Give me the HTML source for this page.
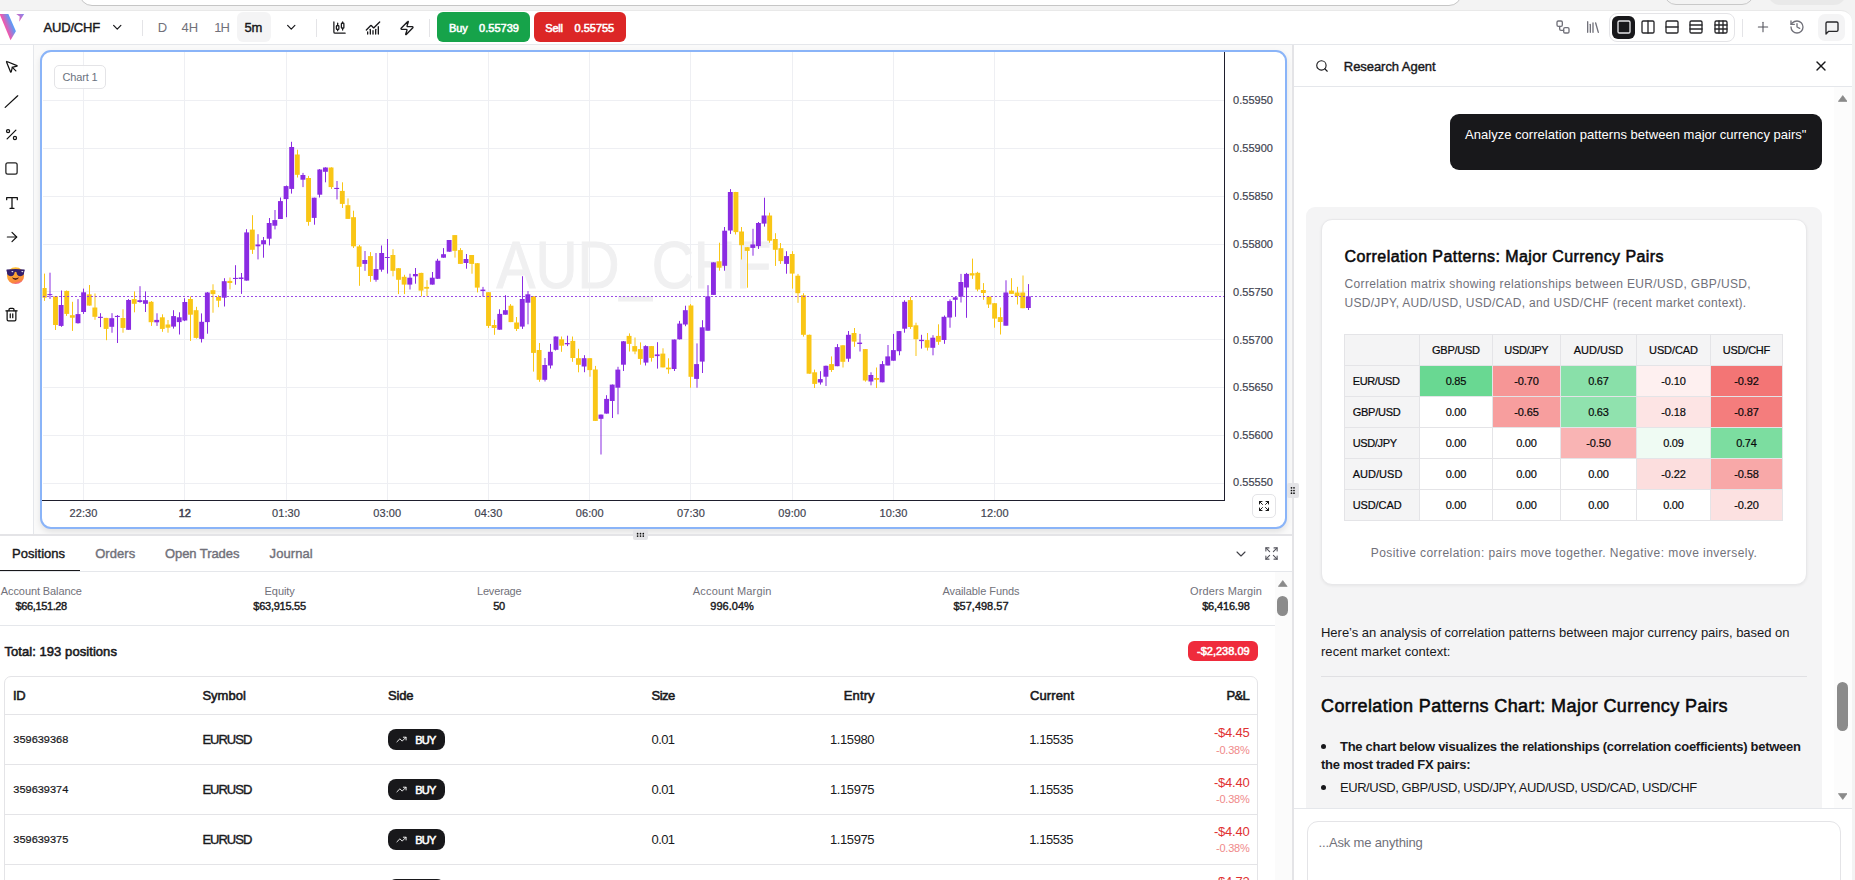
<!DOCTYPE html>
<html><head><meta charset="utf-8"><title>AUD/CHF</title><style>
*{box-sizing:border-box;margin:0;padding:0}
html,body{width:1855px;height:880px;overflow:hidden;background:#f3f3f3}
body{font-family:"Liberation Sans",sans-serif;position:relative}
.r{position:absolute;display:block}
.t{position:absolute;white-space:nowrap}
</style></head><body>
<div class="r" style="left:0.00px;top:0.00px;width:1855.00px;height:880.00px;background:#f3f3f3;"></div>
<div class="r" style="left:79.00px;top:-20.00px;width:1383.00px;height:25.50px;background:#ffffff;border:1px solid #c6c6c6;border-radius:13px;"></div>
<div class="r" style="left:1664.00px;top:-20.00px;width:90.00px;height:25.00px;background:#f3f3f3;border:1px solid #c9c9c9;border-radius:12px;"></div>
<div class="r" style="left:1768.00px;top:-20.00px;width:78.00px;height:25.00px;background:#e9e9e9;border-radius:12px;"></div>
<div class="r" style="left:0.00px;top:10.00px;width:1852.00px;height:870.00px;background:#ffffff;border-top-right-radius:11px;border-top:1px solid #e9e9e9;"></div>
<div class="r" style="left:0.00px;top:44.00px;width:1852.00px;height:1.00px;background:#e5e7eb;"></div>
<svg class="r" style="left:0;top:12px" width="28" height="30" viewBox="0 12 28 30"><defs><linearGradient id="lg" gradientUnits="userSpaceOnUse" x1="4.4" y1="25" x2="11.9" y2="22"><stop offset="0.05" stop-color="#ef58ad"/><stop offset="0.95" stop-color="#5b9bf8"/></linearGradient><linearGradient id="lg2" x1="0" y1="1" x2="1" y2="0"><stop offset="0.2" stop-color="#ee58b2"/><stop offset="1" stop-color="#7f8bf0"/></linearGradient></defs><polygon points="-0.4,14 8.4,14 15.9,31.2 10.5,40.2" fill="url(#lg)"/><polygon points="16.2,13.9 24.2,13.9 19.2,21.8 19.7,16.4" fill="url(#lg2)"/></svg>
<div class="t fit" id="t1" style="top:18.50px;font-size:13px;line-height:18px;color:#18181b;-webkit-text-stroke:0.4px #18181b;letter-spacing:-0.197px;left:43.60px;">AUD/CHF</div>
<svg class="r" style="left:110.00px;top:20.20px;" width="14.5" height="14.5" viewBox="0 0 24 24" fill="none" stroke="#18181b" stroke-width="2" stroke-linecap="round" stroke-linejoin="round"><path d="m6 9 6 6 6-6"/></svg>
<div class="r" style="left:142.00px;top:19.50px;width:1.00px;height:16.00px;background:#e4e4e7;"></div>
<div class="t fit" id="t2" style="top:18.50px;font-size:13px;line-height:18px;color:#71717a;letter-spacing:-0.191px;left:157.80px;">D</div>
<div class="t fit" id="t3" style="top:18.50px;font-size:13px;line-height:18px;color:#71717a;letter-spacing:-0.012px;left:181.60px;">4H</div>
<div class="t fit" id="t4" style="top:18.50px;font-size:13px;line-height:18px;color:#71717a;letter-spacing:-1.013px;left:214.20px;">1H</div>
<div class="r" style="left:237.00px;top:12.00px;width:34.00px;height:30.00px;background:#f4f4f5;border-radius:6px;"></div>
<div class="t fit" id="t5" style="top:18.50px;font-size:13px;line-height:18px;color:#18181b;-webkit-text-stroke:0.4px #18181b;letter-spacing:-0.131px;left:244.50px;">5m</div>
<svg class="r" style="left:284.00px;top:20.20px;" width="14.5" height="14.5" viewBox="0 0 24 24" fill="none" stroke="#18181b" stroke-width="2" stroke-linecap="round" stroke-linejoin="round"><path d="m6 9 6 6 6-6"/></svg>
<div class="r" style="left:316.00px;top:18.50px;width:1.00px;height:18.00px;background:#e4e4e7;"></div>
<svg class="r" style="left:331.60px;top:20.20px;" width="15" height="15" viewBox="0 0 24 24" fill="none" stroke="#18181b" stroke-width="2" stroke-linecap="round" stroke-linejoin="round"><path d="M9 5v4"/><rect width="4" height="6" x="7" y="9" rx="1"/><path d="M9 15v2"/><path d="M17 3v2"/><rect width="4" height="8" x="15" y="5" rx="1"/><path d="M17 13v3"/><path d="M3 3v16a2 2 0 0 0 2 2h16"/></svg>
<svg class="r" style="left:364.50px;top:19.50px;" width="16" height="16" viewBox="0 0 24 24" fill="none" stroke="#18181b" stroke-width="2" stroke-linecap="round" stroke-linejoin="round"><path d="M12 16v5"/><path d="M16 14v7"/><path d="M20 10v11"/><path d="m22 3-8.646 8.646a.5.5 0 0 1-.708 0L9.354 8.354a.5.5 0 0 0-.707 0L2 15"/><path d="M4 18v3"/><path d="M8 14v7"/></svg>
<svg class="r" style="left:398.50px;top:19.50px;" width="16" height="16" viewBox="0 0 24 24" fill="none" stroke="#18181b" stroke-width="2" stroke-linecap="round" stroke-linejoin="round"><path d="M4 14a1 1 0 0 1-.78-1.63l9.9-10.2a.5.5 0 0 1 .86.46l-1.92 6.02A1 1 0 0 0 13 10h7a1 1 0 0 1 .78 1.63l-9.9 10.2a.5.5 0 0 1-.86-.46l1.92-6.02A1 1 0 0 0 11 14z"/></svg>
<div class="r" style="left:429.00px;top:18.50px;width:1.00px;height:18.00px;background:#e4e4e7;"></div>
<div class="r" style="left:437.00px;top:12.00px;width:93.00px;height:30.00px;background:#16a34a;border-radius:6px;"></div>
<div class="t fit" id="t6" style="top:20.70px;font-size:11px;line-height:15px;color:#fff;-webkit-text-stroke:0.55px #fff;letter-spacing:-0.056px;left:449.00px;">Buy</div>
<div class="t fit" id="t7" style="top:20.70px;font-size:11px;line-height:15px;color:#fff;-webkit-text-stroke:0.55px #fff;letter-spacing:0.033px;left:479.00px;">0.55739</div>
<div class="r" style="left:534.00px;top:12.00px;width:92.00px;height:30.00px;background:#dc2626;border-radius:6px;"></div>
<div class="t fit" id="t8" style="top:20.70px;font-size:11px;line-height:15px;color:#fff;-webkit-text-stroke:0.55px #fff;letter-spacing:-0.211px;left:545.30px;">Sell</div>
<div class="t fit" id="t9" style="top:20.70px;font-size:11px;line-height:15px;color:#fff;-webkit-text-stroke:0.55px #fff;letter-spacing:-0.024px;left:574.60px;">0.55755</div>
<svg class="r" style="left:1554.50px;top:18.90px;" width="16" height="16" viewBox="0 0 24 24" fill="none" stroke="#71717a" stroke-width="2" stroke-linecap="round" stroke-linejoin="round"><rect width="8" height="8" x="3" y="3" rx="2"/><path d="M7 11v4a2 2 0 0 0 2 2h4"/><rect width="8" height="8" x="13" y="13" rx="2"/></svg>
<svg class="r" style="left:1584.50px;top:18.90px;" width="16" height="16" viewBox="0 0 24 24" fill="none" stroke="#71717a" stroke-width="2" stroke-linecap="round" stroke-linejoin="round"><path d="m16 6 4 14"/><path d="M12 6v14"/><path d="M8 8v12"/><path d="M4 4v16"/></svg>
<div class="r" style="left:1609.00px;top:13.00px;width:126.00px;height:29.00px;background:#fff;border:1px solid #e4e4e7;border-radius:8px;"></div>
<div class="r" style="left:1612.00px;top:16.00px;width:23.00px;height:23.00px;background:#18181b;border-radius:6px;"></div>
<svg class="r" style="left:1615.50px;top:18.90px;" width="16" height="16" viewBox="0 0 24 24" fill="none" stroke="#e4e4e7" stroke-width="2" stroke-linecap="round" stroke-linejoin="round"><rect width="18" height="18" x="3" y="3" rx="2"/></svg>
<svg class="r" style="left:1639.50px;top:18.90px;" width="16" height="16" viewBox="0 0 24 24" fill="none" stroke="#27272a" stroke-width="2" stroke-linecap="round" stroke-linejoin="round"><rect width="18" height="18" x="3" y="3" rx="2"/><path d="M12 3v18"/></svg>
<svg class="r" style="left:1663.50px;top:18.90px;" width="16" height="16" viewBox="0 0 24 24" fill="none" stroke="#27272a" stroke-width="2" stroke-linecap="round" stroke-linejoin="round"><rect width="18" height="18" x="3" y="3" rx="2"/><path d="M3 12h18"/></svg>
<svg class="r" style="left:1688.20px;top:18.90px;" width="16" height="16" viewBox="0 0 24 24" fill="none" stroke="#27272a" stroke-width="2" stroke-linecap="round" stroke-linejoin="round"><rect width="18" height="18" x="3" y="3" rx="2"/><path d="M21 9H3"/><path d="M21 15H3"/></svg>
<svg class="r" style="left:1712.50px;top:18.90px;" width="16" height="16" viewBox="0 0 24 24" fill="none" stroke="#27272a" stroke-width="2" stroke-linecap="round" stroke-linejoin="round"><rect width="18" height="18" x="3" y="3" rx="2"/><path d="M3 9h18"/><path d="M3 15h18"/><path d="M9 3v18"/><path d="M15 3v18"/></svg>
<div class="r" style="left:1742.00px;top:18.50px;width:1.00px;height:18.00px;background:#e4e4e7;"></div>
<svg class="r" style="left:1755.30px;top:18.90px;" width="16" height="16" viewBox="0 0 24 24" fill="none" stroke="#52525b" stroke-width="1.6" stroke-linecap="round" stroke-linejoin="round"><path d="M5 12h14"/><path d="M12 5v14"/></svg>
<svg class="r" style="left:1789.30px;top:19.30px;" width="16" height="16" viewBox="0 0 24 24" fill="none" stroke="#71717a" stroke-width="2" stroke-linecap="round" stroke-linejoin="round"><path d="M3 12a9 9 0 1 0 9-9 9.75 9.75 0 0 0-6.74 2.74L3 8"/><path d="M3 3v5h5"/><path d="M12 7v5l4 2"/></svg>
<div class="r" style="left:1818.00px;top:14.00px;width:27.00px;height:27.00px;background:#f4f4f5;border-radius:7px;"></div>
<svg class="r" style="left:1823.60px;top:19.60px;" width="16" height="16" viewBox="0 0 24 24" fill="none" stroke="#27272a" stroke-width="2" stroke-linecap="round" stroke-linejoin="round"><path d="M21 15a2 2 0 0 1-2 2H7l-4 4V5a2 2 0 0 1 2-2h14a2 2 0 0 1 2 2z"/></svg>
<div class="r" style="left:33.00px;top:45.00px;width:1.00px;height:490.00px;background:#e5e7eb;"></div>
<svg class="r" style="left:3.50px;top:58.90px;" width="15" height="15" viewBox="0 0 24 24" fill="none" stroke="#111" stroke-width="2" stroke-linecap="round" stroke-linejoin="round"><path d="M4.037 4.688a.495.495 0 0 1 .651-.651l16 6.5a.5.5 0 0 1-.063.947l-6.124 1.58a2 2 0 0 0-1.438 1.435l-1.579 6.126a.5.5 0 0 1-.947.063z"/><path d="m13 13 6 6"/></svg>
<svg class="r" style="left:0;top:90px" width="24" height="24" viewBox="0 90 24 24"><path d="M5.2 107.4 L17.7 95.8" stroke="#111" stroke-width="1.25" stroke-linecap="round"/></svg>
<svg class="r" style="left:4.00px;top:127.00px;" width="15" height="15" viewBox="0 0 24 24" fill="none" stroke="#111" stroke-width="2" stroke-linecap="round" stroke-linejoin="round"><line x1="19" x2="5" y1="5" y2="19"/><circle cx="6.5" cy="6.5" r="2.5"/><circle cx="17.5" cy="17.5" r="2.5"/></svg>
<svg class="r" style="left:3.90px;top:161.20px;" width="15" height="15" viewBox="0 0 24 24" fill="none" stroke="#222" stroke-width="2" stroke-linecap="round" stroke-linejoin="round"><rect width="18" height="18" x="3" y="3" rx="3"/></svg>
<svg class="r" style="left:3.70px;top:194.70px;" width="16" height="16" viewBox="0 0 24 24" fill="none" stroke="#111" stroke-width="1.9" stroke-linecap="round" stroke-linejoin="round"><polyline points="4 7 4 4 20 4 20 7"/><line x1="9" x2="15" y1="20" y2="20"/><line x1="12" x2="12" y1="4" y2="20"/></svg>
<svg class="r" style="left:3.60px;top:228.50px;" width="16" height="16" viewBox="0 0 24 24" fill="none" stroke="#111" stroke-width="1.8" stroke-linecap="round" stroke-linejoin="round"><path d="M5 12h14"/><path d="m12 5 7 7-7 7"/></svg>
<svg class="r" style="left:4px;top:264px" width="24" height="24" viewBox="4 264 24 24"><defs><linearGradient id="em" x1="0.3" y1="0" x2="0.6" y2="1"><stop offset="0" stop-color="#ffc234"/><stop offset="0.55" stop-color="#fda033"/><stop offset="0.85" stop-color="#f9843f"/><stop offset="1" stop-color="#f0609a"/></linearGradient></defs><ellipse cx="15.55" cy="275.7" rx="8.6" ry="8.4" fill="url(#em)"/><path d="M6.6 269.6 Q15.5 268.6 24.6 269.6 L24.7 271.3 L24.2 271.6 Q24.3 276.2 20.3 276.2 Q16.9 276.2 16.5 272.2 Q15.55 271.3 14.6 272.2 Q14.2 276.2 10.8 276.2 Q6.8 276.2 6.9 271.6 L6.4 271.3 Z" fill="#35206c"/><ellipse cx="12.4" cy="271.6" rx="1" ry="0.6" fill="#fff" opacity="0.9"/><ellipse cx="22.3" cy="271.6" rx="1" ry="0.6" fill="#fff" opacity="0.9"/><path d="M12 277.3 Q15.5 279.2 19 277.3 Q18.2 280 15.5 280 Q12.8 280 12 277.3 Z" fill="#4d2218"/></svg>
<svg class="r" style="left:4.20px;top:307.30px;" width="15" height="15" viewBox="0 0 24 24" fill="none" stroke="#111" stroke-width="2" stroke-linecap="round" stroke-linejoin="round"><path d="M3 6h18"/><path d="M19 6v14c0 1-1 2-2 2H7c-1 0-2-1-2-2V6"/><path d="M8 6V4c0-1 1-2 2-2h4c1 0 2 1 2 2v2"/><line x1="10" x2="10" y1="11" y2="17"/><line x1="14" x2="14" y1="11" y2="17"/></svg>
<div class="r" style="left:34.00px;top:45.00px;width:1258.30px;height:489.00px;background:#fafafa;"></div>
<div class="r" style="left:40.00px;top:50.00px;width:1247.00px;height:478.80px;background:#fff;border:2px solid #8ab4f8;border-radius:11px;box-shadow:0 3px 6px rgba(0,0,0,0.10);"></div>
<svg class="r" style="left:0;top:0" width="1300" height="540" viewBox="0 0 1300 540" shape-rendering="crispEdges"><defs><clipPath id="plot"><rect x="42.5" y="52" width="1181.5" height="448"/></clipPath></defs><rect x="83" y="52" width="1" height="448" fill="#eeeff3"/><rect x="184" y="52" width="1" height="448" fill="#eeeff3"/><rect x="286" y="52" width="1" height="448" fill="#eeeff3"/><rect x="387" y="52" width="1" height="448" fill="#eeeff3"/><rect x="488" y="52" width="1" height="448" fill="#eeeff3"/><rect x="589" y="52" width="1" height="448" fill="#eeeff3"/><rect x="690" y="52" width="1" height="448" fill="#eeeff3"/><rect x="792" y="52" width="1" height="448" fill="#eeeff3"/><rect x="893" y="52" width="1" height="448" fill="#eeeff3"/><rect x="994" y="52" width="1" height="448" fill="#eeeff3"/><rect x="42.5" y="100" width="1181.5" height="1" fill="#eeeff3"/><rect x="42.5" y="148" width="1181.5" height="1" fill="#eeeff3"/><rect x="42.5" y="196" width="1181.5" height="1" fill="#eeeff3"/><rect x="42.5" y="244" width="1181.5" height="1" fill="#eeeff3"/><rect x="42.5" y="291" width="1181.5" height="1" fill="#eeeff3"/><rect x="42.5" y="339" width="1181.5" height="1" fill="#eeeff3"/><rect x="42.5" y="387" width="1181.5" height="1" fill="#eeeff3"/><rect x="42.5" y="435" width="1181.5" height="1" fill="#eeeff3"/><rect x="42.5" y="483" width="1181.5" height="1" fill="#eeeff3"/></svg>
<div class="t" style="left:334px;top:224.5px;width:600px;text-align:center;font-size:67.5px;line-height:80px;color:#f0f0f1;-webkit-text-stroke:1.1px #f0f0f1;transform:scaleX(0.862);transform-origin:50% 50%">AUD_CHF</div>
<svg class="r" style="left:0;top:0" width="1300" height="540" viewBox="0 0 1300 540"><g clip-path="url(#plot)"><rect x="44" y="273.6" width="1" height="27.3" fill="#f9c616"/><rect x="41.79" y="288.0" width="4.9" height="9.7" fill="#f9c616"/><rect x="49" y="272.7" width="2" height="26.2" fill="#8a2be2" opacity="0.5"/><rect x="47.41" y="294.1" width="4.9" height="1.0" fill="#8a2be2"/><rect x="55" y="296.4" width="1" height="33.6" fill="#f9c616"/><rect x="53.04" y="296.4" width="4.9" height="28.6" fill="#f9c616"/><rect x="61" y="290.5" width="1" height="36.3" fill="#8a2be2"/><rect x="58.66" y="305.0" width="4.9" height="20.9" fill="#8a2be2"/><rect x="66" y="290.5" width="1" height="25.4" fill="#f9c616"/><rect x="64.28" y="290.9" width="4.9" height="23.0" fill="#f9c616"/><rect x="72" y="301.8" width="1" height="29.1" fill="#f9c616"/><rect x="69.91" y="315.2" width="4.9" height="2.5" fill="#f9c616"/><rect x="77" y="299.1" width="2" height="24.5" fill="#8a2be2" opacity="0.5"/><rect x="75.53" y="314.1" width="4.9" height="9.1" fill="#8a2be2"/><rect x="83" y="288.6" width="1" height="25.3" fill="#8a2be2"/><rect x="81.15" y="292.3" width="4.9" height="19.7" fill="#8a2be2"/><rect x="89" y="285.0" width="1" height="20.6" fill="#f9c616"/><rect x="86.78" y="294.4" width="4.9" height="11.2" fill="#f9c616"/><rect x="94" y="293.5" width="2" height="26.3" fill="#f9c616" opacity="0.5"/><rect x="92.40" y="307.5" width="4.9" height="9.3" fill="#f9c616"/><rect x="100" y="313.2" width="1" height="13.9" fill="#8a2be2"/><rect x="98.02" y="316.8" width="4.9" height="1.1" fill="#8a2be2"/><rect x="106" y="317.9" width="1" height="22.3" fill="#f9c616"/><rect x="103.65" y="317.9" width="4.9" height="11.0" fill="#f9c616"/><rect x="111" y="313.2" width="2" height="19.5" fill="#8a2be2" opacity="0.5"/><rect x="109.27" y="318.2" width="4.9" height="8.6" fill="#8a2be2"/><rect x="117" y="315.0" width="1" height="28.0" fill="#8a2be2"/><rect x="114.90" y="315.9" width="4.9" height="1.1" fill="#8a2be2"/><rect x="122" y="309.3" width="2" height="23.4" fill="#f9c616" opacity="0.5"/><rect x="120.52" y="318.0" width="4.9" height="9.9" fill="#f9c616"/><rect x="128" y="299.1" width="1" height="30.7" fill="#8a2be2"/><rect x="126.14" y="300.0" width="4.9" height="29.8" fill="#8a2be2"/><rect x="134" y="291.4" width="1" height="20.9" fill="#f9c616"/><rect x="131.77" y="299.1" width="4.9" height="4.7" fill="#f9c616"/><rect x="139" y="286.2" width="2" height="16.5" fill="#8a2be2" opacity="0.5"/><rect x="137.39" y="300.2" width="4.9" height="1.8" fill="#8a2be2"/><rect x="145" y="291.4" width="1" height="20.6" fill="#8a2be2"/><rect x="143.01" y="300.2" width="4.9" height="3.6" fill="#8a2be2"/><rect x="151" y="301.1" width="1" height="24.8" fill="#f9c616"/><rect x="148.64" y="301.8" width="4.9" height="20.4" fill="#f9c616"/><rect x="156" y="313.3" width="2" height="12.6" fill="#8a2be2" opacity="0.5"/><rect x="154.26" y="319.9" width="4.9" height="2.4" fill="#8a2be2"/><rect x="162" y="314.3" width="1" height="17.5" fill="#f9c616"/><rect x="159.88" y="317.3" width="4.9" height="11.6" fill="#f9c616"/><rect x="167" y="320.0" width="2" height="12.7" fill="#f9c616" opacity="0.5"/><rect x="165.51" y="324.5" width="4.9" height="3.2" fill="#f9c616"/><rect x="173" y="310.2" width="1" height="18.4" fill="#8a2be2"/><rect x="171.13" y="316.1" width="4.9" height="10.5" fill="#8a2be2"/><rect x="179" y="312.3" width="1" height="22.2" fill="#8a2be2"/><rect x="176.75" y="317.3" width="4.9" height="4.8" fill="#8a2be2"/><rect x="184" y="298.2" width="1" height="22.9" fill="#8a2be2"/><rect x="182.38" y="302.0" width="4.9" height="18.5" fill="#8a2be2"/><rect x="190" y="296.6" width="1" height="44.3" fill="#f9c616"/><rect x="188.00" y="299.0" width="4.9" height="15.7" fill="#f9c616"/><rect x="196" y="306.8" width="1" height="31.8" fill="#f9c616"/><rect x="193.62" y="310.2" width="4.9" height="27.7" fill="#f9c616"/><rect x="201" y="313.4" width="1" height="29.1" fill="#8a2be2"/><rect x="199.25" y="321.8" width="4.9" height="17.1" fill="#8a2be2"/><rect x="207" y="292.1" width="1" height="41.6" fill="#8a2be2"/><rect x="204.87" y="292.5" width="4.9" height="29.6" fill="#8a2be2"/><rect x="212" y="284.3" width="2" height="28.4" fill="#f9c616" opacity="0.5"/><rect x="210.50" y="290.2" width="4.9" height="3.9" fill="#f9c616"/><rect x="218" y="295.2" width="1" height="12.0" fill="#f9c616"/><rect x="216.12" y="297.0" width="4.9" height="3.7" fill="#f9c616"/><rect x="224" y="278.2" width="1" height="28.3" fill="#8a2be2"/><rect x="221.74" y="281.2" width="4.9" height="16.5" fill="#8a2be2"/><rect x="229" y="277.5" width="2" height="11.9" fill="#f9c616" opacity="0.5"/><rect x="227.37" y="280.9" width="4.9" height="2.1" fill="#f9c616"/><rect x="235" y="265.2" width="1" height="19.5" fill="#8a2be2"/><rect x="232.99" y="277.9" width="4.9" height="1.1" fill="#8a2be2"/><rect x="241" y="273.0" width="1" height="20.9" fill="#8a2be2"/><rect x="238.61" y="277.5" width="4.9" height="1.5" fill="#8a2be2"/><rect x="246" y="229.2" width="1" height="51.4" fill="#8a2be2"/><rect x="244.24" y="232.4" width="4.9" height="48.2" fill="#8a2be2"/><rect x="252" y="215.2" width="1" height="38.7" fill="#f9c616"/><rect x="249.86" y="229.6" width="4.9" height="20.2" fill="#f9c616"/><rect x="257" y="234.2" width="2" height="25.2" fill="#8a2be2" opacity="0.5"/><rect x="255.48" y="244.5" width="4.9" height="1.8" fill="#8a2be2"/><rect x="263" y="237.0" width="1" height="20.7" fill="#8a2be2"/><rect x="261.11" y="240.2" width="4.9" height="4.1" fill="#8a2be2"/><rect x="269" y="218.0" width="1" height="27.4" fill="#8a2be2"/><rect x="266.73" y="223.0" width="4.9" height="15.7" fill="#8a2be2"/><rect x="274" y="210.0" width="2" height="19.4" fill="#8a2be2" opacity="0.5"/><rect x="272.35" y="220.1" width="4.9" height="5.6" fill="#8a2be2"/><rect x="280" y="197.5" width="1" height="21.5" fill="#8a2be2"/><rect x="277.98" y="201.1" width="4.9" height="17.9" fill="#8a2be2"/><rect x="286" y="185.5" width="1" height="31.7" fill="#8a2be2"/><rect x="283.60" y="186.1" width="4.9" height="13.0" fill="#8a2be2"/><rect x="291" y="141.8" width="1" height="51.8" fill="#8a2be2"/><rect x="289.22" y="147.0" width="4.9" height="41.9" fill="#8a2be2"/><rect x="297" y="149.7" width="1" height="27.8" fill="#f9c616"/><rect x="294.85" y="154.5" width="4.9" height="20.3" fill="#f9c616"/><rect x="302" y="172.9" width="2" height="14.2" fill="#8a2be2" opacity="0.5"/><rect x="300.47" y="175.0" width="4.9" height="4.7" fill="#8a2be2"/><rect x="308" y="175.9" width="1" height="49.8" fill="#f9c616"/><rect x="306.09" y="178.0" width="4.9" height="43.9" fill="#f9c616"/><rect x="314" y="197.7" width="1" height="27.0" fill="#8a2be2"/><rect x="311.72" y="197.7" width="4.9" height="20.2" fill="#8a2be2"/><rect x="319" y="169.1" width="1" height="28.4" fill="#8a2be2"/><rect x="317.34" y="169.5" width="4.9" height="25.2" fill="#8a2be2"/><rect x="325" y="167.3" width="1" height="15.0" fill="#8a2be2"/><rect x="322.97" y="167.5" width="4.9" height="4.3" fill="#8a2be2"/><rect x="331" y="167.3" width="1" height="21.6" fill="#f9c616"/><rect x="328.59" y="167.5" width="4.9" height="19.6" fill="#f9c616"/><rect x="336" y="181.0" width="2" height="18.4" fill="#8a2be2" opacity="0.5"/><rect x="334.21" y="187.9" width="4.9" height="1.1" fill="#8a2be2"/><rect x="342" y="182.3" width="1" height="25.7" fill="#f9c616"/><rect x="339.84" y="190.9" width="4.9" height="13.0" fill="#f9c616"/><rect x="347" y="198.4" width="2" height="20.5" fill="#f9c616" opacity="0.5"/><rect x="345.46" y="205.2" width="4.9" height="13.7" fill="#f9c616"/><rect x="353" y="210.7" width="1" height="37.3" fill="#f9c616"/><rect x="351.08" y="217.2" width="4.9" height="29.1" fill="#f9c616"/><rect x="359" y="245.0" width="1" height="40.8" fill="#f9c616"/><rect x="356.71" y="246.4" width="4.9" height="20.4" fill="#f9c616"/><rect x="364" y="251.0" width="2" height="19.8" fill="#8a2be2" opacity="0.5"/><rect x="362.33" y="260.0" width="4.9" height="3.9" fill="#8a2be2"/><rect x="370" y="252.1" width="1" height="29.7" fill="#f9c616"/><rect x="367.95" y="256.1" width="4.9" height="19.9" fill="#f9c616"/><rect x="375" y="253.0" width="2" height="28.7" fill="#8a2be2" opacity="0.5"/><rect x="373.58" y="269.1" width="4.9" height="10.7" fill="#8a2be2"/><rect x="381" y="245.5" width="1" height="26.2" fill="#8a2be2"/><rect x="379.20" y="253.0" width="4.9" height="16.7" fill="#8a2be2"/><rect x="387" y="239.0" width="1" height="34.6" fill="#8a2be2"/><rect x="384.82" y="257.0" width="4.9" height="1.0" fill="#8a2be2"/><rect x="392" y="249.2" width="2" height="27.1" fill="#f9c616" opacity="0.5"/><rect x="390.45" y="255.0" width="4.9" height="15.8" fill="#f9c616"/><rect x="398" y="268.0" width="1" height="26.1" fill="#f9c616"/><rect x="396.07" y="268.2" width="4.9" height="11.6" fill="#f9c616"/><rect x="404" y="274.8" width="1" height="19.3" fill="#f9c616"/><rect x="401.69" y="276.8" width="4.9" height="7.8" fill="#f9c616"/><rect x="409" y="273.7" width="2" height="15.8" fill="#8a2be2" opacity="0.5"/><rect x="407.32" y="277.7" width="4.9" height="6.9" fill="#8a2be2"/><rect x="415" y="268.0" width="1" height="15.7" fill="#8a2be2"/><rect x="412.94" y="274.0" width="4.9" height="2.3" fill="#8a2be2"/><rect x="421" y="272.8" width="1" height="23.5" fill="#f9c616"/><rect x="418.56" y="272.9" width="4.9" height="17.7" fill="#f9c616"/><rect x="426" y="280.2" width="2" height="16.1" fill="#f9c616" opacity="0.5"/><rect x="424.19" y="286.9" width="4.9" height="1.8" fill="#f9c616"/><rect x="432" y="272.0" width="1" height="12.6" fill="#8a2be2"/><rect x="429.81" y="277.7" width="4.9" height="6.9" fill="#8a2be2"/><rect x="437" y="258.8" width="1" height="20.0" fill="#8a2be2"/><rect x="435.44" y="260.7" width="4.9" height="18.1" fill="#8a2be2"/><rect x="443" y="248.1" width="1" height="9.6" fill="#8a2be2"/><rect x="441.06" y="254.2" width="4.9" height="3.5" fill="#8a2be2"/><rect x="449" y="240.0" width="1" height="11.7" fill="#8a2be2"/><rect x="446.68" y="240.0" width="4.9" height="11.7" fill="#8a2be2"/><rect x="454" y="235.1" width="2" height="22.5" fill="#f9c616" opacity="0.5"/><rect x="452.31" y="235.1" width="4.9" height="15.7" fill="#f9c616"/><rect x="460" y="248.1" width="1" height="15.8" fill="#f9c616"/><rect x="457.93" y="250.1" width="4.9" height="13.8" fill="#f9c616"/><rect x="466" y="254.0" width="1" height="14.7" fill="#8a2be2"/><rect x="463.55" y="259.0" width="4.9" height="4.0" fill="#8a2be2"/><rect x="471" y="255.0" width="2" height="18.7" fill="#f9c616" opacity="0.5"/><rect x="469.18" y="255.0" width="4.9" height="8.9" fill="#f9c616"/><rect x="477" y="263.1" width="1" height="29.3" fill="#f9c616"/><rect x="474.80" y="263.2" width="4.9" height="24.4" fill="#f9c616"/><rect x="482" y="286.9" width="2" height="9.7" fill="#8a2be2" opacity="0.5"/><rect x="480.42" y="289.6" width="4.9" height="1.4" fill="#8a2be2"/><rect x="488" y="292.1" width="1" height="35.9" fill="#f9c616"/><rect x="486.05" y="292.2" width="4.9" height="33.7" fill="#f9c616"/><rect x="494" y="319.8" width="1" height="15.0" fill="#f9c616"/><rect x="491.67" y="325.0" width="4.9" height="3.0" fill="#f9c616"/><rect x="499" y="309.3" width="1" height="20.4" fill="#8a2be2"/><rect x="497.29" y="313.9" width="4.9" height="15.8" fill="#8a2be2"/><rect x="505" y="295.2" width="1" height="19.5" fill="#8a2be2"/><rect x="502.92" y="310.2" width="4.9" height="4.5" fill="#8a2be2"/><rect x="510" y="304.1" width="1" height="18.0" fill="#f9c616"/><rect x="508.54" y="305.7" width="4.9" height="16.4" fill="#f9c616"/><rect x="516" y="317.0" width="1" height="14.0" fill="#f9c616"/><rect x="514.16" y="322.5" width="4.9" height="6.4" fill="#f9c616"/><rect x="522" y="276.2" width="1" height="52.7" fill="#8a2be2"/><rect x="519.79" y="299.0" width="4.9" height="27.6" fill="#8a2be2"/><rect x="527" y="291.1" width="2" height="33.2" fill="#8a2be2" opacity="0.5"/><rect x="525.41" y="294.3" width="4.9" height="8.4" fill="#8a2be2"/><rect x="533" y="296.3" width="1" height="75.3" fill="#f9c616"/><rect x="531.03" y="296.3" width="4.9" height="56.6" fill="#f9c616"/><rect x="539" y="343.0" width="1" height="38.8" fill="#f9c616"/><rect x="536.66" y="350.0" width="4.9" height="29.8" fill="#f9c616"/><rect x="544" y="358.0" width="2" height="23.5" fill="#8a2be2" opacity="0.5"/><rect x="542.28" y="365.0" width="4.9" height="14.8" fill="#8a2be2"/><rect x="550" y="343.9" width="1" height="24.6" fill="#8a2be2"/><rect x="547.90" y="351.8" width="4.9" height="13.7" fill="#8a2be2"/><rect x="555" y="336.5" width="1" height="14.0" fill="#8a2be2"/><rect x="553.53" y="336.5" width="4.9" height="13.3" fill="#8a2be2"/><rect x="561" y="336.5" width="1" height="15.3" fill="#f9c616"/><rect x="559.15" y="339.3" width="4.9" height="6.4" fill="#f9c616"/><rect x="567" y="335.7" width="1" height="10.4" fill="#8a2be2"/><rect x="564.78" y="343.0" width="4.9" height="1.3" fill="#8a2be2"/><rect x="572" y="336.5" width="1" height="25.3" fill="#f9c616"/><rect x="570.40" y="340.9" width="4.9" height="17.1" fill="#f9c616"/><rect x="578" y="348.8" width="1" height="23.5" fill="#f9c616"/><rect x="576.02" y="358.2" width="4.9" height="6.6" fill="#f9c616"/><rect x="584" y="355.2" width="1" height="17.0" fill="#8a2be2"/><rect x="581.65" y="358.2" width="4.9" height="8.3" fill="#8a2be2"/><rect x="589" y="358.0" width="2" height="18.7" fill="#f9c616" opacity="0.5"/><rect x="587.27" y="358.2" width="4.9" height="11.9" fill="#f9c616"/><rect x="595" y="365.9" width="1" height="55.0" fill="#f9c616"/><rect x="592.89" y="369.5" width="4.9" height="51.4" fill="#f9c616"/><rect x="600" y="414.5" width="2" height="40.0" fill="#8a2be2" opacity="0.5"/><rect x="598.52" y="414.6" width="4.9" height="4.2" fill="#8a2be2"/><rect x="606" y="395.2" width="1" height="18.4" fill="#8a2be2"/><rect x="604.14" y="398.9" width="4.9" height="14.7" fill="#8a2be2"/><rect x="612" y="384.5" width="1" height="33.5" fill="#8a2be2"/><rect x="609.76" y="384.6" width="4.9" height="16.4" fill="#8a2be2"/><rect x="617" y="366.8" width="2" height="47.5" fill="#8a2be2" opacity="0.5"/><rect x="615.39" y="369.6" width="4.9" height="18.1" fill="#8a2be2"/><rect x="623" y="341.0" width="1" height="30.0" fill="#8a2be2"/><rect x="621.01" y="341.3" width="4.9" height="23.4" fill="#8a2be2"/><rect x="629" y="333.4" width="1" height="18.1" fill="#f9c616"/><rect x="626.63" y="335.9" width="4.9" height="8.0" fill="#f9c616"/><rect x="634" y="337.5" width="2" height="16.7" fill="#f9c616" opacity="0.5"/><rect x="632.26" y="346.1" width="4.9" height="5.4" fill="#f9c616"/><rect x="640" y="342.4" width="1" height="22.3" fill="#f9c616"/><rect x="637.88" y="349.1" width="4.9" height="9.8" fill="#f9c616"/><rect x="645" y="345.3" width="1" height="20.2" fill="#8a2be2"/><rect x="643.50" y="346.1" width="4.9" height="16.5" fill="#8a2be2"/><rect x="651" y="346.0" width="1" height="15.6" fill="#f9c616"/><rect x="649.13" y="346.1" width="4.9" height="11.8" fill="#f9c616"/><rect x="657" y="342.2" width="1" height="26.4" fill="#8a2be2"/><rect x="654.75" y="354.4" width="4.9" height="1.7" fill="#8a2be2"/><rect x="662" y="348.3" width="2" height="19.1" fill="#f9c616" opacity="0.5"/><rect x="660.38" y="353.6" width="4.9" height="13.8" fill="#f9c616"/><rect x="668" y="358.3" width="1" height="15.4" fill="#f9c616"/><rect x="666.00" y="367.6" width="4.9" height="1.7" fill="#f9c616"/><rect x="674" y="339.5" width="1" height="31.5" fill="#8a2be2"/><rect x="671.62" y="339.5" width="4.9" height="29.5" fill="#8a2be2"/><rect x="679" y="320.9" width="1" height="18.6" fill="#8a2be2"/><rect x="677.25" y="323.6" width="4.9" height="15.7" fill="#8a2be2"/><rect x="685" y="305.7" width="1" height="20.5" fill="#8a2be2"/><rect x="682.87" y="310.2" width="4.9" height="14.3" fill="#8a2be2"/><rect x="690" y="304.1" width="1" height="83.6" fill="#f9c616"/><rect x="688.49" y="305.5" width="4.9" height="71.3" fill="#f9c616"/><rect x="696" y="343.4" width="2" height="44.3" fill="#8a2be2" opacity="0.5"/><rect x="694.12" y="364.1" width="4.9" height="14.8" fill="#8a2be2"/><rect x="702" y="320.2" width="1" height="52.8" fill="#8a2be2"/><rect x="699.74" y="327.3" width="4.9" height="34.3" fill="#8a2be2"/><rect x="707" y="285.2" width="2" height="45.5" fill="#8a2be2" opacity="0.5"/><rect x="705.36" y="296.4" width="4.9" height="34.3" fill="#8a2be2"/><rect x="713" y="262.3" width="1" height="32.6" fill="#8a2be2"/><rect x="710.99" y="262.4" width="4.9" height="32.5" fill="#8a2be2"/><rect x="719" y="242.7" width="1" height="28.0" fill="#f9c616"/><rect x="716.61" y="261.3" width="4.9" height="6.4" fill="#f9c616"/><rect x="724" y="227.0" width="1" height="43.7" fill="#8a2be2"/><rect x="722.23" y="230.7" width="4.9" height="35.1" fill="#8a2be2"/><rect x="730" y="189.1" width="1" height="44.8" fill="#8a2be2"/><rect x="727.86" y="192.0" width="4.9" height="38.5" fill="#8a2be2"/><rect x="735" y="191.9" width="1" height="42.6" fill="#f9c616"/><rect x="733.48" y="192.0" width="4.9" height="40.1" fill="#f9c616"/><rect x="741" y="227.0" width="1" height="32.5" fill="#f9c616"/><rect x="739.10" y="231.5" width="4.9" height="13.7" fill="#f9c616"/><rect x="747" y="247.1" width="1" height="40.6" fill="#f9c616"/><rect x="744.73" y="247.2" width="4.9" height="3.7" fill="#f9c616"/><rect x="752" y="228.8" width="2" height="26.9" fill="#8a2be2" opacity="0.5"/><rect x="750.35" y="244.4" width="4.9" height="3.5" fill="#8a2be2"/><rect x="758" y="222.0" width="1" height="26.9" fill="#8a2be2"/><rect x="755.97" y="223.0" width="4.9" height="23.1" fill="#8a2be2"/><rect x="764" y="197.7" width="1" height="28.9" fill="#8a2be2"/><rect x="761.60" y="215.5" width="4.9" height="8.1" fill="#8a2be2"/><rect x="769" y="212.7" width="1" height="30.0" fill="#f9c616"/><rect x="767.22" y="215.5" width="4.9" height="25.2" fill="#f9c616"/><rect x="775" y="233.2" width="1" height="32.7" fill="#f9c616"/><rect x="772.84" y="239.0" width="4.9" height="10.8" fill="#f9c616"/><rect x="780" y="243.0" width="1" height="20.9" fill="#f9c616"/><rect x="778.47" y="248.2" width="4.9" height="12.9" fill="#f9c616"/><rect x="786" y="251.2" width="1" height="22.5" fill="#8a2be2"/><rect x="784.09" y="256.1" width="4.9" height="7.8" fill="#8a2be2"/><rect x="792" y="251.2" width="1" height="37.4" fill="#f9c616"/><rect x="789.72" y="254.0" width="4.9" height="19.6" fill="#f9c616"/><rect x="797" y="273.9" width="2" height="28.9" fill="#f9c616" opacity="0.5"/><rect x="795.34" y="275.7" width="4.9" height="17.5" fill="#f9c616"/><rect x="803" y="293.2" width="1" height="43.4" fill="#f9c616"/><rect x="800.96" y="295.3" width="4.9" height="39.5" fill="#f9c616"/><rect x="809" y="334.6" width="1" height="39.1" fill="#f9c616"/><rect x="806.59" y="334.8" width="4.9" height="38.9" fill="#f9c616"/><rect x="814" y="369.6" width="1" height="18.4" fill="#f9c616"/><rect x="812.21" y="372.3" width="4.9" height="11.6" fill="#f9c616"/><rect x="820" y="371.2" width="1" height="13.4" fill="#8a2be2"/><rect x="817.83" y="379.1" width="4.9" height="3.4" fill="#8a2be2"/><rect x="825" y="365.6" width="2" height="20.4" fill="#8a2be2" opacity="0.5"/><rect x="823.46" y="365.8" width="4.9" height="10.9" fill="#8a2be2"/><rect x="831" y="356.4" width="1" height="15.5" fill="#f9c616"/><rect x="829.08" y="364.1" width="4.9" height="5.9" fill="#f9c616"/><rect x="837" y="344.1" width="1" height="22.1" fill="#8a2be2"/><rect x="834.70" y="347.1" width="4.9" height="19.1" fill="#8a2be2"/><rect x="842" y="345.1" width="2" height="22.4" fill="#f9c616" opacity="0.5"/><rect x="840.33" y="345.3" width="4.9" height="16.5" fill="#f9c616"/><rect x="848" y="331.0" width="1" height="30.8" fill="#8a2be2"/><rect x="845.95" y="334.8" width="4.9" height="23.9" fill="#8a2be2"/><rect x="854" y="328.0" width="1" height="18.8" fill="#f9c616"/><rect x="851.57" y="333.0" width="4.9" height="8.6" fill="#f9c616"/><rect x="859" y="333.9" width="2" height="17.6" fill="#8a2be2" opacity="0.5"/><rect x="857.20" y="342.6" width="4.9" height="1.4" fill="#8a2be2"/><rect x="865" y="349.0" width="1" height="32.6" fill="#f9c616"/><rect x="862.82" y="349.1" width="4.9" height="31.4" fill="#f9c616"/><rect x="870" y="372.3" width="2" height="13.0" fill="#8a2be2" opacity="0.5"/><rect x="868.44" y="375.0" width="4.9" height="6.5" fill="#8a2be2"/><rect x="876" y="367.5" width="1" height="20.5" fill="#f9c616"/><rect x="874.07" y="378.0" width="4.9" height="1.8" fill="#f9c616"/><rect x="882" y="361.1" width="1" height="21.2" fill="#8a2be2"/><rect x="879.69" y="364.1" width="4.9" height="18.2" fill="#8a2be2"/><rect x="887" y="345.0" width="2" height="20.5" fill="#8a2be2" opacity="0.5"/><rect x="885.31" y="356.4" width="4.9" height="9.1" fill="#8a2be2"/><rect x="893" y="333.9" width="1" height="26.8" fill="#8a2be2"/><rect x="890.94" y="350.1" width="4.9" height="10.6" fill="#8a2be2"/><rect x="899" y="331.0" width="1" height="24.3" fill="#8a2be2"/><rect x="896.56" y="331.1" width="4.9" height="20.1" fill="#8a2be2"/><rect x="904" y="300.3" width="1" height="32.4" fill="#8a2be2"/><rect x="902.19" y="301.8" width="4.9" height="26.9" fill="#8a2be2"/><rect x="910" y="297.0" width="1" height="31.9" fill="#f9c616"/><rect x="907.81" y="300.1" width="4.9" height="26.9" fill="#f9c616"/><rect x="915" y="322.7" width="2" height="33.3" fill="#f9c616" opacity="0.5"/><rect x="913.43" y="325.3" width="4.9" height="13.9" fill="#f9c616"/><rect x="921" y="334.8" width="1" height="13.8" fill="#8a2be2"/><rect x="919.06" y="339.8" width="4.9" height="1.3" fill="#8a2be2"/><rect x="927" y="333.0" width="1" height="17.5" fill="#f9c616"/><rect x="924.68" y="340.1" width="4.9" height="7.6" fill="#f9c616"/><rect x="932" y="335.2" width="2" height="20.1" fill="#8a2be2" opacity="0.5"/><rect x="930.30" y="337.7" width="4.9" height="10.1" fill="#8a2be2"/><rect x="938" y="324.3" width="1" height="20.5" fill="#f9c616"/><rect x="935.93" y="335.9" width="4.9" height="5.9" fill="#f9c616"/><rect x="944" y="315.5" width="1" height="28.3" fill="#8a2be2"/><rect x="941.55" y="316.8" width="4.9" height="23.2" fill="#8a2be2"/><rect x="949" y="299.4" width="2" height="28.3" fill="#8a2be2" opacity="0.5"/><rect x="947.17" y="301.1" width="4.9" height="16.4" fill="#8a2be2"/><rect x="955" y="296.4" width="1" height="20.4" fill="#8a2be2"/><rect x="952.80" y="297.3" width="4.9" height="2.5" fill="#8a2be2"/><rect x="960" y="273.9" width="2" height="28.6" fill="#8a2be2" opacity="0.5"/><rect x="958.42" y="282.0" width="4.9" height="14.6" fill="#8a2be2"/><rect x="966" y="272.9" width="1" height="44.9" fill="#8a2be2"/><rect x="964.04" y="273.9" width="4.9" height="13.6" fill="#8a2be2"/><rect x="972" y="258.6" width="1" height="20.3" fill="#f9c616"/><rect x="969.67" y="273.2" width="4.9" height="2.3" fill="#f9c616"/><rect x="977" y="271.8" width="1" height="19.5" fill="#f9c616"/><rect x="975.29" y="272.8" width="4.9" height="16.7" fill="#f9c616"/><rect x="983" y="283.1" width="1" height="16.7" fill="#f9c616"/><rect x="980.91" y="290.0" width="4.9" height="3.0" fill="#f9c616"/><rect x="988" y="296.1" width="1" height="11.9" fill="#f9c616"/><rect x="986.54" y="296.6" width="4.9" height="7.9" fill="#f9c616"/><rect x="994" y="303.0" width="1" height="24.7" fill="#f9c616"/><rect x="992.16" y="303.2" width="4.9" height="15.4" fill="#f9c616"/><rect x="1000" y="307.5" width="1" height="27.0" fill="#f9c616"/><rect x="997.78" y="317.1" width="4.9" height="4.9" fill="#f9c616"/><rect x="1005" y="280.3" width="2" height="45.4" fill="#8a2be2" opacity="0.5"/><rect x="1003.41" y="292.5" width="4.9" height="33.2" fill="#8a2be2"/><rect x="1011" y="278.2" width="1" height="15.7" fill="#f9c616"/><rect x="1009.03" y="290.6" width="4.9" height="3.3" fill="#f9c616"/><rect x="1017" y="286.8" width="1" height="17.7" fill="#f9c616"/><rect x="1014.66" y="292.5" width="4.9" height="3.5" fill="#f9c616"/><rect x="1022" y="275.5" width="2" height="32.7" fill="#f9c616" opacity="0.5"/><rect x="1020.28" y="292.5" width="4.9" height="15.7" fill="#f9c616"/><rect x="1028" y="284.1" width="1" height="25.9" fill="#8a2be2"/><rect x="1025.90" y="296.4" width="4.9" height="11.6" fill="#8a2be2"/></g><line x1="43" y1="296.5" x2="1224" y2="296.5" stroke="#8a2be2" stroke-width="1.1" stroke-dasharray="2 2" stroke-opacity="0.85" shape-rendering="geometricPrecision"/><rect x="1224" y="52" width="1" height="449" fill="#1e1e2d" shape-rendering="crispEdges"/><rect x="42" y="500" width="1183" height="1" fill="#1e1e2d" shape-rendering="crispEdges"/></svg>
<div class="t fit" id="t10" style="top:93.30px;font-size:11px;line-height:15px;color:#3f4350;-webkit-text-stroke:0.2px #3f4350;letter-spacing:0.033px;left:1233.00px;">0.55950</div>
<div class="t fit" id="t11" style="top:141.15px;font-size:11px;line-height:15px;color:#3f4350;-webkit-text-stroke:0.2px #3f4350;letter-spacing:0.033px;left:1233.00px;">0.55900</div>
<div class="t fit" id="t12" style="top:189.00px;font-size:11px;line-height:15px;color:#3f4350;-webkit-text-stroke:0.2px #3f4350;letter-spacing:0.033px;left:1233.00px;">0.55850</div>
<div class="t fit" id="t13" style="top:236.85px;font-size:11px;line-height:15px;color:#3f4350;-webkit-text-stroke:0.2px #3f4350;letter-spacing:0.033px;left:1233.00px;">0.55800</div>
<div class="t fit" id="t14" style="top:284.70px;font-size:11px;line-height:15px;color:#3f4350;-webkit-text-stroke:0.2px #3f4350;letter-spacing:0.033px;left:1233.00px;">0.55750</div>
<div class="t fit" id="t15" style="top:332.55px;font-size:11px;line-height:15px;color:#3f4350;-webkit-text-stroke:0.2px #3f4350;letter-spacing:0.033px;left:1233.00px;">0.55700</div>
<div class="t fit" id="t16" style="top:380.40px;font-size:11px;line-height:15px;color:#3f4350;-webkit-text-stroke:0.2px #3f4350;letter-spacing:0.033px;left:1233.00px;">0.55650</div>
<div class="t fit" id="t17" style="top:428.25px;font-size:11px;line-height:15px;color:#3f4350;-webkit-text-stroke:0.2px #3f4350;letter-spacing:0.033px;left:1233.00px;">0.55600</div>
<div class="t fit" id="t18" style="top:475.30px;font-size:11px;line-height:15px;color:#3f4350;-webkit-text-stroke:0.2px #3f4350;letter-spacing:0.033px;left:1233.00px;">0.55550</div>
<div class="t fit" style="top:505.70px;font-size:11px;line-height:15px;color:#3f4350;-webkit-text-stroke:0.2px #3f4350;letter-spacing:0.094px;left:83.55px;width:0;display:flex;justify-content:center;"><span id="t19" style="white-space:nowrap">22:30</span></div>
<div class="t" style="top:505.50px;font-size:11px;line-height:15px;color:#3f4350;-webkit-text-stroke:0.55px #3f4350;left:184.75px;width:0;display:flex;justify-content:center;"><span id="t20" style="white-space:nowrap">12</span></div>
<div class="t fit" style="top:505.70px;font-size:11px;line-height:15px;color:#3f4350;-webkit-text-stroke:0.2px #3f4350;letter-spacing:0.094px;left:286.05px;width:0;display:flex;justify-content:center;"><span id="t21" style="white-space:nowrap">01:30</span></div>
<div class="t fit" style="top:505.70px;font-size:11px;line-height:15px;color:#3f4350;-webkit-text-stroke:0.2px #3f4350;letter-spacing:0.094px;left:387.30px;width:0;display:flex;justify-content:center;"><span id="t22" style="white-space:nowrap">03:00</span></div>
<div class="t fit" style="top:505.70px;font-size:11px;line-height:15px;color:#3f4350;-webkit-text-stroke:0.2px #3f4350;letter-spacing:0.094px;left:488.55px;width:0;display:flex;justify-content:center;"><span id="t23" style="white-space:nowrap">04:30</span></div>
<div class="t fit" style="top:505.70px;font-size:11px;line-height:15px;color:#3f4350;-webkit-text-stroke:0.2px #3f4350;letter-spacing:0.094px;left:589.80px;width:0;display:flex;justify-content:center;"><span id="t24" style="white-space:nowrap">06:00</span></div>
<div class="t fit" style="top:505.70px;font-size:11px;line-height:15px;color:#3f4350;-webkit-text-stroke:0.2px #3f4350;letter-spacing:0.094px;left:691.05px;width:0;display:flex;justify-content:center;"><span id="t25" style="white-space:nowrap">07:30</span></div>
<div class="t fit" style="top:505.70px;font-size:11px;line-height:15px;color:#3f4350;-webkit-text-stroke:0.2px #3f4350;letter-spacing:0.094px;left:792.30px;width:0;display:flex;justify-content:center;"><span id="t26" style="white-space:nowrap">09:00</span></div>
<div class="t fit" style="top:505.70px;font-size:11px;line-height:15px;color:#3f4350;-webkit-text-stroke:0.2px #3f4350;letter-spacing:0.094px;left:893.55px;width:0;display:flex;justify-content:center;"><span id="t27" style="white-space:nowrap">10:30</span></div>
<div class="t fit" style="top:505.70px;font-size:11px;line-height:15px;color:#3f4350;-webkit-text-stroke:0.2px #3f4350;letter-spacing:0.094px;left:994.80px;width:0;display:flex;justify-content:center;"><span id="t28" style="white-space:nowrap">12:00</span></div>
<div class="r" style="left:54.00px;top:65.00px;width:52.00px;height:24.00px;background:rgba(255,255,255,0.85);border:1px solid #e4e4e7;border-radius:5px;"></div>
<div class="t fit" id="t29" style="top:69.80px;font-size:11px;line-height:15px;color:#6b7280;letter-spacing:-0.154px;left:62.50px;">Chart 1</div>
<div class="r" style="left:1252.30px;top:494.00px;width:23.70px;height:23.50px;background:#fff;border:1px solid #e4e4e7;border-radius:5px;"></div>
<svg class="r" style="left:1258.30px;top:499.80px;" width="12" height="12" viewBox="0 0 24 24" fill="none" stroke="#111" stroke-width="1.9" stroke-linecap="round" stroke-linejoin="round"><path d="m15 15 6 6"/><path d="m15 9 6-6"/><path d="M21 16v5h-5"/><path d="M21 8V3h-5"/><path d="M3 16v5h5"/><path d="m3 21 6-6"/><path d="M3 8V3h5"/><path d="M9 9 3 3"/></svg>
<div class="r" style="left:0.00px;top:534.00px;width:1293.00px;height:2.00px;background:#e4e4e7;"></div>
<div class="r" style="left:1292.30px;top:45.00px;width:1.50px;height:835.00px;background:#e4e4e7;"></div>
<div class="r" style="left:0.00px;top:536.00px;width:1292.50px;height:344.00px;background:#fff;"></div>
<div class="t fit" id="t30" style="top:544.50px;font-size:13px;line-height:18px;color:#18181b;-webkit-text-stroke:0.4px #18181b;letter-spacing:0.028px;left:12.10px;">Positions</div>
<div class="t fit" id="t31" style="top:544.50px;font-size:13px;line-height:18px;color:#71717a;-webkit-text-stroke:0.4px #71717a;letter-spacing:0.044px;left:95.20px;">Orders</div>
<div class="t fit" id="t32" style="top:544.50px;font-size:13px;line-height:18px;color:#71717a;-webkit-text-stroke:0.4px #71717a;letter-spacing:-0.078px;left:165.00px;">Open Trades</div>
<div class="t fit" id="t33" style="top:544.50px;font-size:13px;line-height:18px;color:#71717a;-webkit-text-stroke:0.4px #71717a;letter-spacing:0.080px;left:269.60px;">Journal</div>
<div class="r" style="left:0.00px;top:571.00px;width:1292.50px;height:1.00px;background:#e5e7eb;"></div>
<div class="r" style="left:0.00px;top:569.70px;width:80.00px;height:1.60px;background:#18181b;"></div>
<svg class="r" style="left:1233.30px;top:545.60px;" width="16" height="16" viewBox="0 0 24 24" fill="none" stroke="#3f3f46" stroke-width="1.6" stroke-linecap="round" stroke-linejoin="round"><path d="m6 9 6 6 6-6"/></svg>
<svg class="r" style="left:1264.00px;top:546.00px;" width="15" height="15" viewBox="0 0 24 24" fill="none" stroke="#52525b" stroke-width="1.7" stroke-linecap="round" stroke-linejoin="round"><path d="m15 15 6 6"/><path d="m15 9 6-6"/><path d="M21 16v5h-5"/><path d="M21 8V3h-5"/><path d="M3 16v5h5"/><path d="m3 21 6-6"/><path d="M3 8V3h5"/><path d="M9 9 3 3"/></svg>
<div class="r" style="left:1274.50px;top:572.00px;width:18.00px;height:308.00px;background:#fbfbfb;"></div>
<svg class="r" style="left:1278px;top:579.8px" width="9.5" height="7" viewBox="0 0 11 8"><path d="M5.5 0.6 L10.6 7.4 H0.4 Z" fill="#8a8a8a" stroke="#8a8a8a" stroke-width="0.8" stroke-linejoin="round"/></svg>
<div class="r" style="left:1276.80px;top:595.50px;width:11.60px;height:20.00px;background:#8b8b8b;border-radius:6px;"></div>
<div class="t fit" style="top:583.80px;font-size:11px;line-height:15px;color:#71717a;letter-spacing:-0.104px;left:41.35px;width:0;display:flex;justify-content:center;"><span id="t34" style="white-space:nowrap">Account Balance</span></div>
<div class="t fit" style="top:598.80px;font-size:11px;line-height:15px;color:#18181b;-webkit-text-stroke:0.4px #18181b;letter-spacing:-0.376px;left:41.21px;width:0;display:flex;justify-content:center;"><span id="t35" style="white-space:nowrap">$66,151.28</span></div>
<div class="t fit" style="top:583.80px;font-size:11px;line-height:15px;color:#71717a;letter-spacing:-0.063px;left:279.67px;width:0;display:flex;justify-content:center;"><span id="t36" style="white-space:nowrap">Equity</span></div>
<div class="t fit" style="top:598.80px;font-size:11px;line-height:15px;color:#18181b;-webkit-text-stroke:0.4px #18181b;letter-spacing:-0.256px;left:279.57px;width:0;display:flex;justify-content:center;"><span id="t37" style="white-space:nowrap">$63,915.55</span></div>
<div class="t fit" style="top:583.80px;font-size:11px;line-height:15px;color:#71717a;letter-spacing:-0.159px;left:499.22px;width:0;display:flex;justify-content:center;"><span id="t38" style="white-space:nowrap">Leverage</span></div>
<div class="t fit" style="top:598.80px;font-size:11px;line-height:15px;color:#18181b;-webkit-text-stroke:0.4px #18181b;letter-spacing:-0.375px;left:499.11px;width:0;display:flex;justify-content:center;"><span id="t39" style="white-space:nowrap">50</span></div>
<div class="t fit" style="top:583.80px;font-size:11px;line-height:15px;color:#71717a;letter-spacing:0.169px;left:732.18px;width:0;display:flex;justify-content:center;"><span id="t40" style="white-space:nowrap">Account Margin</span></div>
<div class="t fit" style="top:598.80px;font-size:11px;line-height:15px;color:#18181b;-webkit-text-stroke:0.4px #18181b;letter-spacing:0.009px;left:732.10px;width:0;display:flex;justify-content:center;"><span id="t41" style="white-space:nowrap">996.04%</span></div>
<div class="t fit" style="top:583.80px;font-size:11px;line-height:15px;color:#71717a;letter-spacing:-0.072px;left:980.96px;width:0;display:flex;justify-content:center;"><span id="t42" style="white-space:nowrap">Available Funds</span></div>
<div class="t fit" style="top:598.80px;font-size:11px;line-height:15px;color:#18181b;-webkit-text-stroke:0.4px #18181b;letter-spacing:-0.006px;left:981.00px;width:0;display:flex;justify-content:center;"><span id="t43" style="white-space:nowrap">$57,498.57</span></div>
<div class="t fit" style="top:583.80px;font-size:11px;line-height:15px;color:#71717a;letter-spacing:0.131px;left:1226.07px;width:0;display:flex;justify-content:center;"><span id="t44" style="white-space:nowrap">Orders Margin</span></div>
<div class="t fit" style="top:598.80px;font-size:11px;line-height:15px;color:#18181b;-webkit-text-stroke:0.4px #18181b;letter-spacing:-0.160px;left:1225.92px;width:0;display:flex;justify-content:center;"><span id="t45" style="white-space:nowrap">$6,416.98</span></div>
<div class="r" style="left:0.00px;top:625.00px;width:1274.50px;height:1.00px;background:#e5e7eb;"></div>
<div class="t fit" id="t46" style="top:643.00px;font-size:13px;line-height:18px;color:#18181b;-webkit-text-stroke:0.55px #18181b;letter-spacing:0.065px;left:4.40px;">Total: 193 positions</div>
<div class="r" style="left:1188.30px;top:641.20px;width:69.80px;height:19.70px;background:#ef2b3c;border-radius:6px;"></div>
<div class="t fit" id="t47" style="top:643.70px;font-size:11px;line-height:15px;color:#fff;-webkit-text-stroke:0.55px #fff;letter-spacing:0.009px;left:1197.00px;">-$2,238.09</div>
<div class="r" style="left:4.00px;top:676.00px;width:1254.00px;height:220.00px;background:#fff;border:1px solid #e4e4e7;border-radius:7px;"></div>
<div class="t fit" id="t48" style="top:686.60px;font-size:13px;line-height:18px;color:#18181b;-webkit-text-stroke:0.55px #18181b;letter-spacing:-0.550px;left:13.10px;">ID</div>
<div class="t fit" id="t49" style="top:686.60px;font-size:13px;line-height:18px;color:#18181b;-webkit-text-stroke:0.55px #18181b;letter-spacing:0.007px;left:202.40px;">Symbol</div>
<div class="t fit" id="t50" style="top:686.60px;font-size:13px;line-height:18px;color:#18181b;-webkit-text-stroke:0.55px #18181b;letter-spacing:-0.183px;left:388.10px;">Side</div>
<div class="t fit" id="t51" style="top:686.60px;font-size:13px;line-height:18px;color:#18181b;-webkit-text-stroke:0.55px #18181b;letter-spacing:-0.524px;left:651.60px;">Size</div>
<div class="t fit" id="t52" style="top:686.60px;font-size:13px;line-height:18px;color:#18181b;-webkit-text-stroke:0.55px #18181b;letter-spacing:0.111px;right:980.29px;">Entry</div>
<div class="t fit" id="t53" style="top:686.60px;font-size:13px;line-height:18px;color:#18181b;-webkit-text-stroke:0.55px #18181b;letter-spacing:0.134px;right:780.77px;">Current</div>
<div class="t fit" id="t54" style="top:686.60px;font-size:13px;line-height:18px;color:#18181b;-webkit-text-stroke:0.55px #18181b;letter-spacing:-0.626px;right:605.93px;">P&amp;L</div>
<div class="r" style="left:5.00px;top:714.00px;width:1252.00px;height:1.00px;background:#e4e4e7;"></div>
<div class="t fit" id="t55" style="top:733.10px;font-size:11px;line-height:15px;color:#18181b;-webkit-text-stroke:0.2px #18181b;font-family:'Liberation Mono',monospace;letter-spacing:-0.502px;left:13.10px;">359639368</div>
<div class="t fit" id="t56" style="top:730.70px;font-size:13px;line-height:18px;color:#18181b;-webkit-text-stroke:0.4px #18181b;letter-spacing:-1.001px;left:202.40px;">EURUSD</div>
<div class="r" style="left:388.00px;top:729.00px;width:57.00px;height:21.20px;background:#18181b;border-radius:8px;"></div>
<svg class="r" style="left:396.40px;top:734.30px;" width="11" height="11" viewBox="0 0 24 24" fill="none" stroke="#fff" stroke-width="2" stroke-linecap="round" stroke-linejoin="round"><polyline points="22 7 13.5 15.5 8.5 10.5 2 17"/><polyline points="16 7 22 7 22 13"/></svg>
<div class="t fit" id="t57" style="top:732.50px;font-size:11px;line-height:15px;color:#fff;-webkit-text-stroke:0.55px #fff;letter-spacing:-0.775px;left:415.30px;">BUY</div>
<div class="t fit" id="t58" style="top:730.70px;font-size:13px;line-height:18px;color:#18181b;letter-spacing:-0.653px;left:651.60px;">0.01</div>
<div class="t fit" id="t59" style="top:730.70px;font-size:13px;line-height:18px;color:#18181b;letter-spacing:-0.386px;right:980.79px;">1.15980</div>
<div class="t fit" id="t60" style="top:730.70px;font-size:13px;line-height:18px;color:#18181b;letter-spacing:-0.457px;right:781.86px;">1.15535</div>
<div class="t fit" id="t61" style="top:723.90px;font-size:13px;line-height:18px;color:#e03131;letter-spacing:-0.229px;right:605.53px;">-$4.45</div>
<div class="t fit" id="t62" style="top:742.60px;font-size:11px;line-height:15px;color:#f08a8a;letter-spacing:-0.227px;right:605.53px;">-0.38%</div>
<div class="r" style="left:5.00px;top:764.00px;width:1252.00px;height:1.00px;background:#e4e4e7;"></div>
<div class="t fit" id="t63" style="top:783.10px;font-size:11px;line-height:15px;color:#18181b;-webkit-text-stroke:0.2px #18181b;font-family:'Liberation Mono',monospace;letter-spacing:-0.502px;left:13.10px;">359639374</div>
<div class="t fit" id="t64" style="top:780.70px;font-size:13px;line-height:18px;color:#18181b;-webkit-text-stroke:0.4px #18181b;letter-spacing:-1.001px;left:202.40px;">EURUSD</div>
<div class="r" style="left:388.00px;top:779.00px;width:57.00px;height:21.20px;background:#18181b;border-radius:8px;"></div>
<svg class="r" style="left:396.40px;top:784.30px;" width="11" height="11" viewBox="0 0 24 24" fill="none" stroke="#fff" stroke-width="2" stroke-linecap="round" stroke-linejoin="round"><polyline points="22 7 13.5 15.5 8.5 10.5 2 17"/><polyline points="16 7 22 7 22 13"/></svg>
<div class="t fit" id="t65" style="top:782.50px;font-size:11px;line-height:15px;color:#fff;-webkit-text-stroke:0.55px #fff;letter-spacing:-0.775px;left:415.30px;">BUY</div>
<div class="t fit" id="t66" style="top:780.70px;font-size:13px;line-height:18px;color:#18181b;letter-spacing:-0.653px;left:651.60px;">0.01</div>
<div class="t fit" id="t67" style="top:780.70px;font-size:13px;line-height:18px;color:#18181b;letter-spacing:-0.386px;right:980.79px;">1.15975</div>
<div class="t fit" id="t68" style="top:780.70px;font-size:13px;line-height:18px;color:#18181b;letter-spacing:-0.457px;right:781.86px;">1.15535</div>
<div class="t fit" id="t69" style="top:773.50px;font-size:13px;line-height:18px;color:#e03131;letter-spacing:-0.229px;right:605.53px;">-$4.40</div>
<div class="t fit" id="t70" style="top:791.60px;font-size:11px;line-height:15px;color:#f08a8a;letter-spacing:-0.227px;right:605.53px;">-0.38%</div>
<div class="r" style="left:5.00px;top:814.00px;width:1252.00px;height:1.00px;background:#e4e4e7;"></div>
<div class="t fit" id="t71" style="top:833.10px;font-size:11px;line-height:15px;color:#18181b;-webkit-text-stroke:0.2px #18181b;font-family:'Liberation Mono',monospace;letter-spacing:-0.502px;left:13.10px;">359639375</div>
<div class="t fit" id="t72" style="top:830.70px;font-size:13px;line-height:18px;color:#18181b;-webkit-text-stroke:0.4px #18181b;letter-spacing:-1.001px;left:202.40px;">EURUSD</div>
<div class="r" style="left:388.00px;top:829.00px;width:57.00px;height:21.20px;background:#18181b;border-radius:8px;"></div>
<svg class="r" style="left:396.40px;top:834.30px;" width="11" height="11" viewBox="0 0 24 24" fill="none" stroke="#fff" stroke-width="2" stroke-linecap="round" stroke-linejoin="round"><polyline points="22 7 13.5 15.5 8.5 10.5 2 17"/><polyline points="16 7 22 7 22 13"/></svg>
<div class="t fit" id="t73" style="top:832.50px;font-size:11px;line-height:15px;color:#fff;-webkit-text-stroke:0.55px #fff;letter-spacing:-0.775px;left:415.30px;">BUY</div>
<div class="t fit" id="t74" style="top:830.70px;font-size:13px;line-height:18px;color:#18181b;letter-spacing:-0.653px;left:651.60px;">0.01</div>
<div class="t fit" id="t75" style="top:830.70px;font-size:13px;line-height:18px;color:#18181b;letter-spacing:-0.386px;right:980.79px;">1.15975</div>
<div class="t fit" id="t76" style="top:830.70px;font-size:13px;line-height:18px;color:#18181b;letter-spacing:-0.457px;right:781.86px;">1.15535</div>
<div class="t fit" id="t77" style="top:822.60px;font-size:13px;line-height:18px;color:#e03131;letter-spacing:-0.229px;right:605.53px;">-$4.40</div>
<div class="t fit" id="t78" style="top:841.30px;font-size:11px;line-height:15px;color:#f08a8a;letter-spacing:-0.227px;right:605.53px;">-0.38%</div>
<div class="r" style="left:5.00px;top:864.00px;width:1252.00px;height:1.00px;background:#e4e4e7;"></div>
<div class="t fit" id="t79" style="top:883.10px;font-size:11px;line-height:15px;color:#18181b;-webkit-text-stroke:0.2px #18181b;font-family:'Liberation Mono',monospace;letter-spacing:-0.502px;left:13.10px;">359639376</div>
<div class="t fit" id="t80" style="top:880.70px;font-size:13px;line-height:18px;color:#18181b;-webkit-text-stroke:0.4px #18181b;letter-spacing:-1.001px;left:202.40px;">EURUSD</div>
<div class="r" style="left:388.00px;top:879.00px;width:57.00px;height:21.20px;background:#18181b;border-radius:8px;"></div>
<svg class="r" style="left:396.40px;top:884.30px;" width="11" height="11" viewBox="0 0 24 24" fill="none" stroke="#fff" stroke-width="2" stroke-linecap="round" stroke-linejoin="round"><polyline points="22 7 13.5 15.5 8.5 10.5 2 17"/><polyline points="16 7 22 7 22 13"/></svg>
<div class="t fit" id="t81" style="top:882.50px;font-size:11px;line-height:15px;color:#fff;-webkit-text-stroke:0.55px #fff;letter-spacing:-0.775px;left:415.30px;">BUY</div>
<div class="t fit" id="t82" style="top:880.70px;font-size:13px;line-height:18px;color:#18181b;letter-spacing:-0.653px;left:651.60px;">0.01</div>
<div class="t fit" id="t83" style="top:880.70px;font-size:13px;line-height:18px;color:#18181b;letter-spacing:-0.386px;right:980.79px;">1.15970</div>
<div class="t fit" id="t84" style="top:880.70px;font-size:13px;line-height:18px;color:#18181b;letter-spacing:-0.457px;right:781.86px;">1.15535</div>
<div class="t fit" id="t85" style="top:872.90px;font-size:13px;line-height:18px;color:#e03131;letter-spacing:-0.229px;right:605.53px;">-$4.72</div>
<div class="t fit" id="t86" style="top:891.30px;font-size:11px;line-height:15px;color:#f08a8a;letter-spacing:-0.227px;right:605.53px;">-0.38%</div>
<div class="r" style="left:633.00px;top:528.70px;width:15.00px;height:11.20px;background:#e4e4e7;border-radius:2px;"></div>
<svg class="r" style="left:633px;top:528.7px" width="15" height="11.2" viewBox="633 528.7 15 11.2" fill="#111"><circle cx="637.6" cy="533.4" r="0.85"/><circle cx="637.6" cy="535.8" r="0.85"/><circle cx="640.5" cy="533.4" r="0.85"/><circle cx="640.5" cy="535.8" r="0.85"/><circle cx="643.3" cy="533.4" r="0.85"/><circle cx="643.3" cy="535.8" r="0.85"/></svg>
<div class="r" style="left:1293.50px;top:45.00px;width:558.50px;height:835.00px;background:#fff;"></div>
<svg class="r" style="left:1315.40px;top:58.60px;" width="14" height="14" viewBox="0 0 24 24" fill="none" stroke="#18181b" stroke-width="1.9" stroke-linecap="round" stroke-linejoin="round"><circle cx="11" cy="11" r="8"/><path d="m21 21-4.3-4.3"/></svg>
<div class="t fit" id="t87" style="top:57.80px;font-size:13px;line-height:18px;color:#18181b;-webkit-text-stroke:0.4px #18181b;letter-spacing:-0.051px;left:1343.80px;">Research Agent</div>
<svg class="r" style="left:1812.50px;top:57.50px;" width="16" height="16" viewBox="0 0 24 24" fill="none" stroke="#18181b" stroke-width="2" stroke-linecap="round" stroke-linejoin="round"><path d="M18 6 6 18"/><path d="m6 6 12 12"/></svg>
<div class="r" style="left:1293.50px;top:86.00px;width:558.50px;height:1.00px;background:#e5e7eb;"></div>
<div class="r" style="left:1293px;top:87px;width:559px;height:721.5px;overflow:hidden">
<div class="r" style="left:540.50px;top:0.00px;width:18.50px;height:721.50px;background:#fcfcfc;"></div>
<div class="r" style="left:157.00px;top:27.00px;width:372.00px;height:56.00px;background:#18181b;border-radius:9px;"></div>
<div class="r" style="left:13.00px;top:120.00px;width:516.00px;height:640.00px;background:#f4f4f5;border-radius:9px;"></div>
<div class="r" style="left:28.00px;top:132.00px;width:485.50px;height:366.00px;background:#fff;border:1px solid #e8e8ea;border-radius:11px;box-shadow:0 1px 3px rgba(0,0,0,0.06);"></div>
</div>
<div class="t fit" id="t88" style="top:125.50px;font-size:13px;line-height:18px;color:#fff;letter-spacing:0.028px;left:1465.00px;">Analyze correlation patterns between major currency pairs&quot;</div>
<div class="t fit" id="t89" style="top:246.00px;font-size:16px;line-height:22px;color:#09090b;-webkit-text-stroke:0.55px #09090b;letter-spacing:0.430px;left:1344.50px;">Correlation Patterns: Major Currency Pairs</div>
<div class="t fit" id="t90" style="top:275.80px;font-size:12px;line-height:17px;color:#71717a;letter-spacing:0.359px;left:1344.50px;">Correlation matrix showing relationships between EUR/USD, GBP/USD,</div>
<div class="t fit" id="t91" style="top:294.60px;font-size:12px;line-height:17px;color:#71717a;letter-spacing:0.298px;left:1344.50px;">USD/JPY, AUD/USD, USD/CAD, and USD/CHF (recent market context).</div>
<div class="r" style="left:1344.00px;top:334.00px;width:439.00px;height:187.00px;background:#e4e4e7;"></div>
<div class="r" style="left:1345.00px;top:335.00px;width:74.00px;height:30.00px;background:#f4f4f5;"></div>
<div class="r" style="left:1420.00px;top:335.00px;width:72.00px;height:30.00px;background:#f4f4f5;"></div>
<div class="t fit" style="top:343.00px;font-size:11px;line-height:15px;color:#09090b;-webkit-text-stroke:0.2px #09090b;letter-spacing:-0.245px;left:1455.88px;width:0;display:flex;justify-content:center;"><span id="t92" style="white-space:nowrap">GBP/USD</span></div>
<div class="r" style="left:1493.00px;top:335.00px;width:67.00px;height:30.00px;background:#f4f4f5;"></div>
<div class="t fit" style="top:343.00px;font-size:11px;line-height:15px;color:#09090b;-webkit-text-stroke:0.2px #09090b;letter-spacing:-0.353px;left:1526.32px;width:0;display:flex;justify-content:center;"><span id="t93" style="white-space:nowrap">USD/JPY</span></div>
<div class="r" style="left:1561.00px;top:335.00px;width:75.00px;height:30.00px;background:#f4f4f5;"></div>
<div class="t fit" style="top:343.00px;font-size:11px;line-height:15px;color:#09090b;-webkit-text-stroke:0.2px #09090b;letter-spacing:0.026px;left:1598.51px;width:0;display:flex;justify-content:center;"><span id="t94" style="white-space:nowrap">AUD/USD</span></div>
<div class="r" style="left:1637.00px;top:335.00px;width:73.00px;height:30.00px;background:#f4f4f5;"></div>
<div class="t fit" style="top:343.00px;font-size:11px;line-height:15px;color:#09090b;-webkit-text-stroke:0.2px #09090b;letter-spacing:-0.102px;left:1673.45px;width:0;display:flex;justify-content:center;"><span id="t95" style="white-space:nowrap">USD/CAD</span></div>
<div class="r" style="left:1711.00px;top:335.00px;width:71.00px;height:30.00px;background:#f4f4f5;"></div>
<div class="t fit" style="top:343.00px;font-size:11px;line-height:15px;color:#09090b;-webkit-text-stroke:0.2px #09090b;letter-spacing:-0.199px;left:1746.40px;width:0;display:flex;justify-content:center;"><span id="t96" style="white-space:nowrap">USD/CHF</span></div>
<div class="r" style="left:1345.00px;top:366.00px;width:74.00px;height:30.00px;background:#f4f4f5;"></div>
<div class="t fit" id="t97" style="top:374.00px;font-size:11px;line-height:15px;color:#09090b;-webkit-text-stroke:0.2px #09090b;letter-spacing:-0.374px;left:1352.70px;">EUR/USD</div>
<div class="r" style="left:1420.00px;top:366.00px;width:72.00px;height:30.00px;background:#69d892;"></div>
<div class="t fit" style="top:374.00px;font-size:11px;line-height:15px;color:#09090b;-webkit-text-stroke:0.2px #09090b;letter-spacing:-0.280px;left:1455.86px;width:0;display:flex;justify-content:center;"><span id="t98" style="white-space:nowrap">0.85</span></div>
<div class="r" style="left:1493.00px;top:366.00px;width:67.00px;height:30.00px;background:#f69696;"></div>
<div class="t fit" style="top:374.00px;font-size:11px;line-height:15px;color:#09090b;-webkit-text-stroke:0.2px #09090b;letter-spacing:-0.096px;left:1526.45px;width:0;display:flex;justify-content:center;"><span id="t99" style="white-space:nowrap">-0.70</span></div>
<div class="r" style="left:1561.00px;top:366.00px;width:75.00px;height:30.00px;background:#89e0a9;"></div>
<div class="t fit" style="top:374.00px;font-size:11px;line-height:15px;color:#09090b;-webkit-text-stroke:0.2px #09090b;letter-spacing:-0.280px;left:1598.36px;width:0;display:flex;justify-content:center;"><span id="t100" style="white-space:nowrap">0.67</span></div>
<div class="r" style="left:1637.00px;top:366.00px;width:73.00px;height:30.00px;background:#fef0f0;"></div>
<div class="t fit" style="top:374.00px;font-size:11px;line-height:15px;color:#09090b;-webkit-text-stroke:0.2px #09090b;letter-spacing:-0.096px;left:1673.45px;width:0;display:flex;justify-content:center;"><span id="t101" style="white-space:nowrap">-0.10</span></div>
<div class="r" style="left:1711.00px;top:366.00px;width:71.00px;height:30.00px;background:#f37575;"></div>
<div class="t fit" style="top:374.00px;font-size:11px;line-height:15px;color:#09090b;-webkit-text-stroke:0.2px #09090b;letter-spacing:-0.096px;left:1746.45px;width:0;display:flex;justify-content:center;"><span id="t102" style="white-space:nowrap">-0.92</span></div>
<div class="r" style="left:1345.00px;top:397.00px;width:74.00px;height:30.00px;background:#f4f4f5;"></div>
<div class="t fit" id="t103" style="top:405.00px;font-size:11px;line-height:15px;color:#09090b;-webkit-text-stroke:0.2px #09090b;letter-spacing:-0.245px;left:1352.70px;">GBP/USD</div>
<div class="r" style="left:1420.00px;top:397.00px;width:72.00px;height:30.00px;background:#ffffff;"></div>
<div class="t fit" style="top:405.00px;font-size:11px;line-height:15px;color:#09090b;-webkit-text-stroke:0.2px #09090b;letter-spacing:-0.280px;left:1455.86px;width:0;display:flex;justify-content:center;"><span id="t104" style="white-space:nowrap">0.00</span></div>
<div class="r" style="left:1493.00px;top:397.00px;width:67.00px;height:30.00px;background:#f79e9e;"></div>
<div class="t fit" style="top:405.00px;font-size:11px;line-height:15px;color:#09090b;-webkit-text-stroke:0.2px #09090b;letter-spacing:-0.096px;left:1526.45px;width:0;display:flex;justify-content:center;"><span id="t105" style="white-space:nowrap">-0.65</span></div>
<div class="r" style="left:1561.00px;top:397.00px;width:75.00px;height:30.00px;background:#90e2ae;"></div>
<div class="t fit" style="top:405.00px;font-size:11px;line-height:15px;color:#09090b;-webkit-text-stroke:0.2px #09090b;letter-spacing:-0.280px;left:1598.36px;width:0;display:flex;justify-content:center;"><span id="t106" style="white-space:nowrap">0.63</span></div>
<div class="r" style="left:1637.00px;top:397.00px;width:73.00px;height:30.00px;background:#fde4e4;"></div>
<div class="t fit" style="top:405.00px;font-size:11px;line-height:15px;color:#09090b;-webkit-text-stroke:0.2px #09090b;letter-spacing:-0.096px;left:1673.45px;width:0;display:flex;justify-content:center;"><span id="t107" style="white-space:nowrap">-0.18</span></div>
<div class="r" style="left:1711.00px;top:397.00px;width:71.00px;height:30.00px;background:#f47d7d;"></div>
<div class="t fit" style="top:405.00px;font-size:11px;line-height:15px;color:#09090b;-webkit-text-stroke:0.2px #09090b;letter-spacing:-0.096px;left:1746.45px;width:0;display:flex;justify-content:center;"><span id="t108" style="white-space:nowrap">-0.87</span></div>
<div class="r" style="left:1345.00px;top:428.00px;width:74.00px;height:30.00px;background:#f4f4f5;"></div>
<div class="t fit" id="t109" style="top:436.00px;font-size:11px;line-height:15px;color:#09090b;-webkit-text-stroke:0.2px #09090b;letter-spacing:-0.353px;left:1352.70px;">USD/JPY</div>
<div class="r" style="left:1420.00px;top:428.00px;width:72.00px;height:30.00px;background:#ffffff;"></div>
<div class="t fit" style="top:436.00px;font-size:11px;line-height:15px;color:#09090b;-webkit-text-stroke:0.2px #09090b;letter-spacing:-0.280px;left:1455.86px;width:0;display:flex;justify-content:center;"><span id="t110" style="white-space:nowrap">0.00</span></div>
<div class="r" style="left:1493.00px;top:428.00px;width:67.00px;height:30.00px;background:#ffffff;"></div>
<div class="t fit" style="top:436.00px;font-size:11px;line-height:15px;color:#09090b;-webkit-text-stroke:0.2px #09090b;letter-spacing:-0.280px;left:1526.36px;width:0;display:flex;justify-content:center;"><span id="t111" style="white-space:nowrap">0.00</span></div>
<div class="r" style="left:1561.00px;top:428.00px;width:75.00px;height:30.00px;background:#f9b4b4;"></div>
<div class="t fit" style="top:436.00px;font-size:11px;line-height:15px;color:#09090b;-webkit-text-stroke:0.2px #09090b;letter-spacing:-0.096px;left:1598.45px;width:0;display:flex;justify-content:center;"><span id="t112" style="white-space:nowrap">-0.50</span></div>
<div class="r" style="left:1637.00px;top:428.00px;width:73.00px;height:30.00px;background:#effbf3;"></div>
<div class="t fit" style="top:436.00px;font-size:11px;line-height:15px;color:#09090b;-webkit-text-stroke:0.2px #09090b;letter-spacing:-0.280px;left:1673.36px;width:0;display:flex;justify-content:center;"><span id="t113" style="white-space:nowrap">0.09</span></div>
<div class="r" style="left:1711.00px;top:428.00px;width:71.00px;height:30.00px;background:#7cdda0;"></div>
<div class="t fit" style="top:436.00px;font-size:11px;line-height:15px;color:#09090b;-webkit-text-stroke:0.2px #09090b;letter-spacing:-0.280px;left:1746.36px;width:0;display:flex;justify-content:center;"><span id="t114" style="white-space:nowrap">0.74</span></div>
<div class="r" style="left:1345.00px;top:459.00px;width:74.00px;height:30.00px;background:#f4f4f5;"></div>
<div class="t fit" id="t115" style="top:467.00px;font-size:11px;line-height:15px;color:#09090b;-webkit-text-stroke:0.2px #09090b;letter-spacing:0.026px;left:1352.70px;">AUD/USD</div>
<div class="r" style="left:1420.00px;top:459.00px;width:72.00px;height:30.00px;background:#ffffff;"></div>
<div class="t fit" style="top:467.00px;font-size:11px;line-height:15px;color:#09090b;-webkit-text-stroke:0.2px #09090b;letter-spacing:-0.280px;left:1455.86px;width:0;display:flex;justify-content:center;"><span id="t116" style="white-space:nowrap">0.00</span></div>
<div class="r" style="left:1493.00px;top:459.00px;width:67.00px;height:30.00px;background:#ffffff;"></div>
<div class="t fit" style="top:467.00px;font-size:11px;line-height:15px;color:#09090b;-webkit-text-stroke:0.2px #09090b;letter-spacing:-0.280px;left:1526.36px;width:0;display:flex;justify-content:center;"><span id="t117" style="white-space:nowrap">0.00</span></div>
<div class="r" style="left:1561.00px;top:459.00px;width:75.00px;height:30.00px;background:#ffffff;"></div>
<div class="t fit" style="top:467.00px;font-size:11px;line-height:15px;color:#09090b;-webkit-text-stroke:0.2px #09090b;letter-spacing:-0.280px;left:1598.36px;width:0;display:flex;justify-content:center;"><span id="t118" style="white-space:nowrap">0.00</span></div>
<div class="r" style="left:1637.00px;top:459.00px;width:73.00px;height:30.00px;background:#fcdede;"></div>
<div class="t fit" style="top:467.00px;font-size:11px;line-height:15px;color:#09090b;-webkit-text-stroke:0.2px #09090b;letter-spacing:-0.096px;left:1673.45px;width:0;display:flex;justify-content:center;"><span id="t119" style="white-space:nowrap">-0.22</span></div>
<div class="r" style="left:1711.00px;top:459.00px;width:71.00px;height:30.00px;background:#f8a8a8;"></div>
<div class="t fit" style="top:467.00px;font-size:11px;line-height:15px;color:#09090b;-webkit-text-stroke:0.2px #09090b;letter-spacing:-0.096px;left:1746.45px;width:0;display:flex;justify-content:center;"><span id="t120" style="white-space:nowrap">-0.58</span></div>
<div class="r" style="left:1345.00px;top:490.00px;width:74.00px;height:30.00px;background:#f4f4f5;"></div>
<div class="t fit" id="t121" style="top:498.00px;font-size:11px;line-height:15px;color:#09090b;-webkit-text-stroke:0.2px #09090b;letter-spacing:-0.102px;left:1352.70px;">USD/CAD</div>
<div class="r" style="left:1420.00px;top:490.00px;width:72.00px;height:30.00px;background:#ffffff;"></div>
<div class="t fit" style="top:498.00px;font-size:11px;line-height:15px;color:#09090b;-webkit-text-stroke:0.2px #09090b;letter-spacing:-0.280px;left:1455.86px;width:0;display:flex;justify-content:center;"><span id="t122" style="white-space:nowrap">0.00</span></div>
<div class="r" style="left:1493.00px;top:490.00px;width:67.00px;height:30.00px;background:#ffffff;"></div>
<div class="t fit" style="top:498.00px;font-size:11px;line-height:15px;color:#09090b;-webkit-text-stroke:0.2px #09090b;letter-spacing:-0.280px;left:1526.36px;width:0;display:flex;justify-content:center;"><span id="t123" style="white-space:nowrap">0.00</span></div>
<div class="r" style="left:1561.00px;top:490.00px;width:75.00px;height:30.00px;background:#ffffff;"></div>
<div class="t fit" style="top:498.00px;font-size:11px;line-height:15px;color:#09090b;-webkit-text-stroke:0.2px #09090b;letter-spacing:-0.280px;left:1598.36px;width:0;display:flex;justify-content:center;"><span id="t124" style="white-space:nowrap">0.00</span></div>
<div class="r" style="left:1637.00px;top:490.00px;width:73.00px;height:30.00px;background:#ffffff;"></div>
<div class="t fit" style="top:498.00px;font-size:11px;line-height:15px;color:#09090b;-webkit-text-stroke:0.2px #09090b;letter-spacing:-0.280px;left:1673.36px;width:0;display:flex;justify-content:center;"><span id="t125" style="white-space:nowrap">0.00</span></div>
<div class="r" style="left:1711.00px;top:490.00px;width:71.00px;height:30.00px;background:#fce1e1;"></div>
<div class="t fit" style="top:498.00px;font-size:11px;line-height:15px;color:#09090b;-webkit-text-stroke:0.2px #09090b;letter-spacing:-0.096px;left:1746.45px;width:0;display:flex;justify-content:center;"><span id="t126" style="white-space:nowrap">-0.20</span></div>
<div class="t fit" style="top:545.20px;font-size:12px;line-height:17px;color:#71717a;letter-spacing:0.440px;left:1564.02px;width:0;display:flex;justify-content:center;"><span id="t127" style="white-space:nowrap">Positive correlation: pairs move together. Negative: move inversely.</span></div>
<div class="t fit" id="t128" style="top:624.00px;font-size:13px;line-height:18px;color:#18181b;letter-spacing:-0.021px;left:1321.00px;">Here’s an analysis of correlation patterns between major currency pairs, based on</div>
<div class="t fit" id="t129" style="top:642.60px;font-size:13px;line-height:18px;color:#18181b;letter-spacing:0.040px;left:1321.00px;">recent market context:</div>
<div class="r" style="left:1321.00px;top:676.00px;width:486.00px;height:1.00px;background:#e0e0e3;"></div>
<div class="t fit" id="t130" style="top:694.00px;font-size:18px;line-height:25px;color:#09090b;-webkit-text-stroke:0.55px #09090b;letter-spacing:0.393px;left:1321.00px;">Correlation Patterns Chart: Major Currency Pairs</div>
<div class="r" style="left:1321.30px;top:744.20px;width:4.60px;height:4.60px;background:#18181b;border-radius:3px;"></div>
<div class="t fit" id="t131" style="top:738.10px;font-size:13px;line-height:18px;color:#18181b;font-weight:bold;letter-spacing:-0.277px;left:1340.00px;">The chart below visualizes the relationships (correlation coefficients) between</div>
<div class="t fit" id="t132" style="top:755.60px;font-size:13px;line-height:18px;color:#18181b;font-weight:bold;letter-spacing:-0.298px;left:1321.00px;">the most traded FX pairs:</div>
<div class="r" style="left:1321.30px;top:785.40px;width:4.60px;height:4.60px;background:#18181b;border-radius:3px;"></div>
<div class="t fit" id="t133" style="top:778.60px;font-size:13px;line-height:18px;color:#18181b;letter-spacing:-0.458px;left:1340.00px;">EUR/USD, GBP/USD, USD/JPY, AUD/USD, USD/CAD, USD/CHF</div>
<svg class="r" style="left:1837.8px;top:95px" width="9.5" height="7" viewBox="0 0 11 8"><path d="M5.5 0.6 L10.6 7.4 H0.4 Z" fill="#8a8a8a" stroke="#8a8a8a" stroke-width="0.8" stroke-linejoin="round"/></svg>
<svg class="r" style="left:1837.8px;top:793px" width="9.5" height="7" viewBox="0 0 11 8"><path d="M5.5 7.4 L10.6 0.6 H0.4 Z" fill="#8a8a8a" stroke="#8a8a8a" stroke-width="0.8" stroke-linejoin="round"/></svg>
<div class="r" style="left:1837.00px;top:682.00px;width:11.20px;height:48.50px;background:#8b8b8b;border-radius:6px;"></div>
<div class="r" style="left:1293.50px;top:808.00px;width:558.50px;height:1.00px;background:#e5e7eb;"></div>
<div class="r" style="left:1306.50px;top:820.80px;width:534.00px;height:80.00px;background:#fff;border:1px solid #e4e4e7;border-radius:11px;"></div>
<div class="t fit" id="t134" style="top:833.60px;font-size:13px;line-height:18px;color:#71717a;letter-spacing:-0.159px;left:1318.60px;">...Ask me anything</div>
<div class="r" style="left:1292.30px;top:45.00px;width:1.50px;height:835.00px;background:#e4e4e7;"></div>
<div class="r" style="left:1287.00px;top:483.20px;width:11.90px;height:14.50px;background:#e4e4e7;border-radius:2px;"></div>
<svg class="r" style="left:1287px;top:483.2px" width="11.9" height="14.5" viewBox="1287 483.2 11.9 14.5" fill="#111"><circle cx="1291.5" cy="488.0" r="0.85"/><circle cx="1291.5" cy="490.7" r="0.85"/><circle cx="1291.5" cy="493.4" r="0.85"/><circle cx="1294.0" cy="488.0" r="0.85"/><circle cx="1294.0" cy="490.7" r="0.85"/><circle cx="1294.0" cy="493.4" r="0.85"/></svg>
</body></html>
